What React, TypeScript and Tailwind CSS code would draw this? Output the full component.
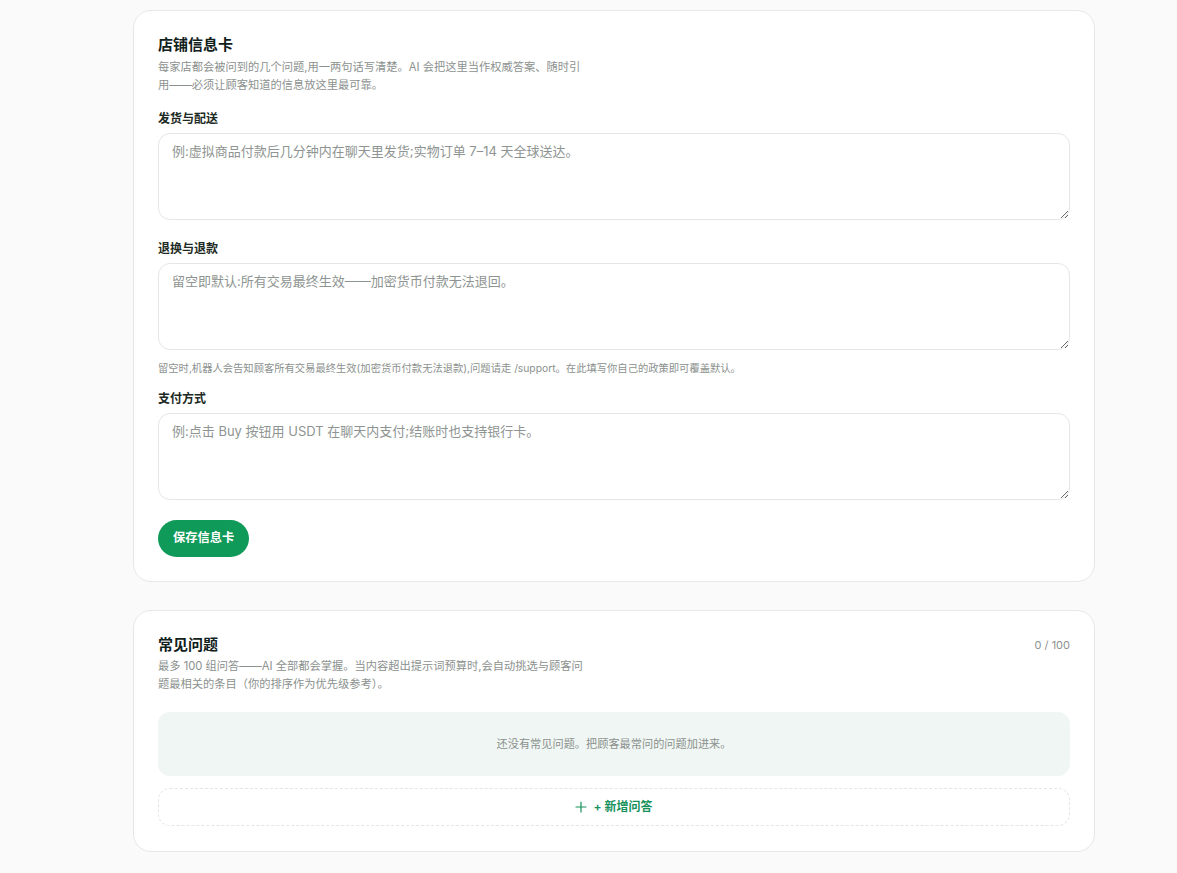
import React from "react";

const font = { fontFamily: "Inter, 'Noto Sans CJK SC', sans-serif" };

function Field({ label, placeholder, hint }: { label: string; placeholder: string; hint?: string }) {
  return (
    <div className="flex flex-col">
      <label className="text-[12px] font-semibold leading-[16px] text-[#1c2a23]">{label}</label>
      <textarea
        placeholder={placeholder}
        className="mt-[6px] h-[87px] w-full rounded-[12px] border border-[#e4e7e5] bg-white px-[13px] pt-[7px] pb-[8px] text-[13px] leading-[20px] text-[#1c2a23] placeholder:text-[#8e9491] outline-none"
      />
      {hint && <p className="mt-[10px] -mb-[6px] text-[10.3px] leading-[16px] text-[#8b918e]">{hint}</p>}
    </div>
  );
}

export default function App() {
  return (
    <div className="min-h-screen bg-[#fafafa] pt-[10px] pb-[30px]" style={font}>
      <div className="ml-[133px] flex w-[962px] flex-col gap-[28px]">
        <section className="rounded-[18px] border border-[#e6e8e7] bg-white px-[24px] pt-[23px] pb-[24px]">
          <h2 className="text-[15px] font-bold leading-[22px] text-[#10201a]">店铺信息卡</h2>
          <p className="mt-[2px] max-w-[428px] text-[11.25px] leading-[18px] text-[#8b918e]">
            每家店都会被问到的几个问题,用一两句话写清楚。AI 会把这里当作权威答案、随时引用——必须让顾客知道的信息放这里最可靠。
          </p>
          <div className="mt-[17px] flex flex-col gap-[21px]">
            <Field label="发货与配送" placeholder="例:虚拟商品付款后几分钟内在聊天里发货;实物订单 7–14 天全球送达。" />
            <Field
              label="退换与退款"
              placeholder="留空即默认:所有交易最终生效——加密货币付款无法退回。"
              hint="留空时,机器人会告知顾客所有交易最终生效(加密货币付款无法退款),问题请走 /support。在此填写你自己的政策即可覆盖默认。"
            />
            <Field label="支付方式" placeholder="例:点击 Buy 按钮用 USDT 在聊天内支付;结账时也支持银行卡。" />
          </div>
          <button className="mt-[20px] h-[37px] rounded-full bg-[#0f9a59] px-[15px] text-[12.25px] font-bold text-white">
            保存信息卡
          </button>
        </section>

        <section className="rounded-[18px] border border-[#e6e8e7] bg-white px-[24px] pt-[23px] pb-[25px]">
          <div className="flex items-start justify-between">
            <div>
              <h2 className="text-[15px] font-bold leading-[22px] text-[#10201a]">常见问题</h2>
              <p className="mt-[1px] max-w-[428px] text-[11.25px] leading-[18px] text-[#8b918e]">
                最多 100 组问答——AI 全部都会掌握。当内容超出提示词预算时,会自动挑选与顾客问题最相关的条目（你的排序作为优先级参考）。
              </p>
            </div>
            <span className="pt-[2px] text-[11px] leading-[18px] text-[#8b918e]">0 / 100</span>
          </div>
          <div className="mt-[19px] flex h-[64px] items-center justify-center rounded-[12px] bg-[#f0f6f3] text-[11.2px] text-[#8b918e]">
            还没有常见问题。把顾客最常问的问题加进来。
          </div>
          <button className="mt-[12px] flex h-[38px] w-full items-center justify-center gap-[6px] rounded-[12px] border border-dashed border-[#e3e6e4] text-[12px] font-semibold text-[#17915a]">
            <svg width="12" height="12" viewBox="0 0 12 12" fill="none" stroke="currentColor" strokeWidth="1.2" strokeLinecap="round">
              <path d="M6 1v10M1 6h10" />
            </svg>
            <span>+ 新增问答</span>
          </button>
        </section>
      </div>
    </div>
  );
}
